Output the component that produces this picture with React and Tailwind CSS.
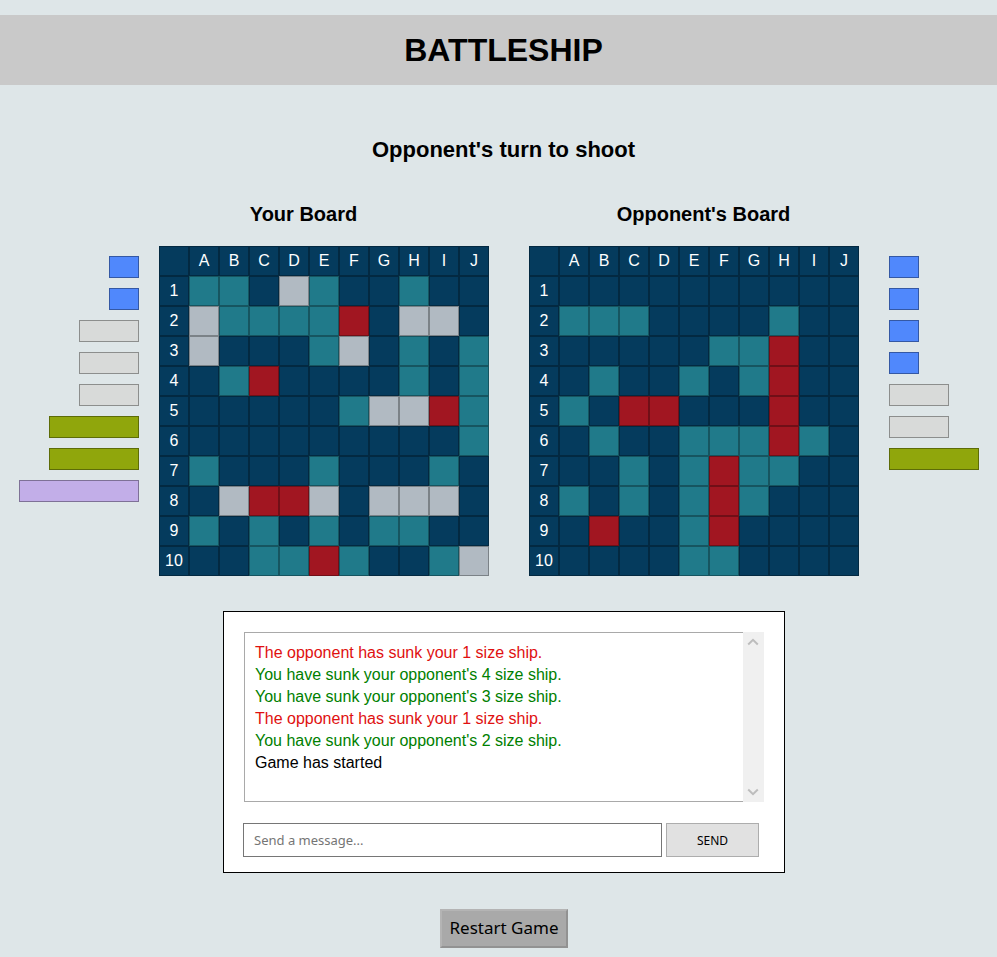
import React from "react";
import { clsx } from "clsx";

const COLUMNS = ["A", "B", "C", "D", "E", "F", "G", "H", "I", "J"];

// One string per row: "." water, "m" miss, "s" ship, "x" hit
const YOUR_BOARD = [
  "mm.sm..m..",
  "smmmmx.ss.",
  "s...ms.m.m",
  ".mx....m.m",
  ".....mssxm",
  ".........m",
  "m...m...m.",
  ".sxxs.sss.",
  "m.m.m.mm..",
  "..mmxm..ms",
];

const OPPONENT_BOARD = [
  "..........",
  "mmm....m..",
  ".....mmx..",
  ".m..m.mx..",
  "m.xx...x..",
  ".m..mmmxm.",
  "..m.mxmm..",
  "m.m.mxm...",
  ".x..mx....",
  "....mm....",
];

const CELL_COLORS = {
  ".": "bg-[#053b5d]",
  m: "bg-[#207a8a]",
  s: "bg-[#b1bac2]",
  x: "bg-[#a11621]",
};

const SHIP_STYLES = {
  1: "w-[30px] bg-[#5088fc]",
  2: "w-[60px] bg-[#d8dad9]",
  3: "w-[90px] bg-[#90a60c]",
  4: "w-[120px] bg-[#c2aee8]",
};

const MESSAGES = [
  { text: "The opponent has sunk your 1 size ship.", color: "text-[#e01010]" },
  { text: "You have sunk your opponent's 4 size ship.", color: "text-[#008000]" },
  { text: "You have sunk your opponent's 3 size ship.", color: "text-[#008000]" },
  { text: "The opponent has sunk your 1 size ship.", color: "text-[#e01010]" },
  { text: "You have sunk your opponent's 2 size ship.", color: "text-[#008000]" },
  { text: "Game has started", color: "text-black" },
];

const CELL = "h-[30px] border border-black/30 p-0 text-center text-base leading-7 font-normal text-white";

function Board({ rows, label }) {
  return (
    <table aria-label={label} className="w-[330px] shrink-0 table-fixed border-separate border-spacing-0">
      <thead>
        <tr>
          <td className={clsx(CELL, "bg-[#053b5d]")} />
          {COLUMNS.map((c) => (
            <th key={c} scope="col" className={clsx(CELL, "bg-[#053b5d]")}>{c}</th>
          ))}
        </tr>
      </thead>
      <tbody>
        {rows.map((row, i) => (
          <tr key={i}>
            <th scope="row" className={clsx(CELL, "bg-[#053b5d]")}>{i + 1}</th>
            {row.split("").map((cell, j) => (
              <td key={j} className={clsx(CELL, CELL_COLORS[cell])} />
            ))}
          </tr>
        ))}
      </tbody>
    </table>
  );
}

function Fleet({ sizes, className }) {
  return (
    <div className={clsx("flex shrink-0 flex-col gap-2.5 pt-2.5", className)}>
      {sizes.map((size, i) => (
        <div key={i} className={clsx("h-[22px] border border-black/35", SHIP_STYLES[size])} />
      ))}
    </div>
  );
}

function Chevron({ d }) {
  return (
    <svg width="12" height="8" viewBox="0 0 12 8" fill="none" stroke="#bdbdbd" strokeWidth="2" aria-hidden="true">
      <path d={d} />
    </svg>
  );
}

function Chat() {
  return (
    <section className="w-full max-w-[562px] border border-black bg-white pt-5 pr-5 pb-[15px] pl-[19px]">
      <div className="ml-px flex h-[170px]">
        <ul className="min-w-0 flex-1 border-y border-l border-[#a9a9a9] px-2.5 py-[9px] text-base leading-[22px]">
          {MESSAGES.map((m, i) => (
            <li key={i} className={m.color}>{m.text}</li>
          ))}
        </ul>
        <div className="flex w-[21px] flex-col items-center justify-between bg-[#f0f0f0] py-1.5 pr-0.5">
          <Chevron d="M1.2 6.500 6 1.800l4.800 4.700" />
          <Chevron d="M1.200 1.500 6 6.200l4.800-4.700" />
        </div>
      </div>
      <form className="mt-[21px] mr-[5px] flex h-[34px] gap-1 font-['Noto_Sans',sans-serif] text-[13px]" onSubmit={(e) => e.preventDefault()}>
        <input
          type="text"
          aria-label="Message"
          placeholder="Send a message..."
          className="min-w-0 flex-1 border border-[#767676] px-2.5 pt-0.5 placeholder:text-[#757575]"
        />
        <button type="submit" className="w-[93px] border border-[#adadad] bg-[#e1e1e1] pt-0.5 text-xs text-black">SEND</button>
      </form>
    </section>
  );
}

export default function App() {
  return (
    <div className="min-h-screen bg-[#dee6e8] pt-[15px] pb-[9px] font-['Liberation_Sans',Arial,sans-serif] text-black">
      <header className="flex h-[70px] items-center justify-center bg-[#c9c9c9] pl-2.5">
        <h1 className="text-[32px] font-bold">BATTLESHIP</h1>
      </header>
      <main className="flex flex-col items-center">
        <h2 className="mt-[51px] pl-2.5 text-[22px] leading-7 font-bold">Opponent's turn to shoot</h2>
        <div className="mt-[35px] flex w-full justify-center pl-2.5 text-center text-xl leading-[30px] font-bold">
          <h3 className="w-[400px]">Your Board</h3>
          <h3 className="w-[400px]">Opponent's Board</h3>
        </div>
        <div className="mt-[17px] flex w-full justify-center pl-px">
          <Fleet sizes={[1, 1, 2, 2, 2, 3, 3, 4]} className="mr-5 w-[120px] items-end" />
          <div className="flex gap-10">
            <Board rows={YOUR_BOARD} label="Your Board" />
            <Board rows={OPPONENT_BOARD} label="Opponent's Board" />
          </div>
          <Fleet sizes={[1, 1, 1, 1, 2, 2, 3]} className="ml-[30px] w-[90px] items-start" />
        </div>
        <div className="mt-[35px] flex w-full flex-col items-center gap-9 pl-[11px]">
          <Chat />
          <button
            type="button"
            className="h-[39px] w-32 border-2 border-t-[#b4b4b4] border-r-[#929292] border-b-[#929292] border-l-[#b4b4b4] bg-[#a9a9a9] pb-0.5 font-['Noto_Sans',sans-serif] text-[17px] leading-none"
          >
            Restart Game
          </button>
        </div>
      </main>
    </div>
  );
}
